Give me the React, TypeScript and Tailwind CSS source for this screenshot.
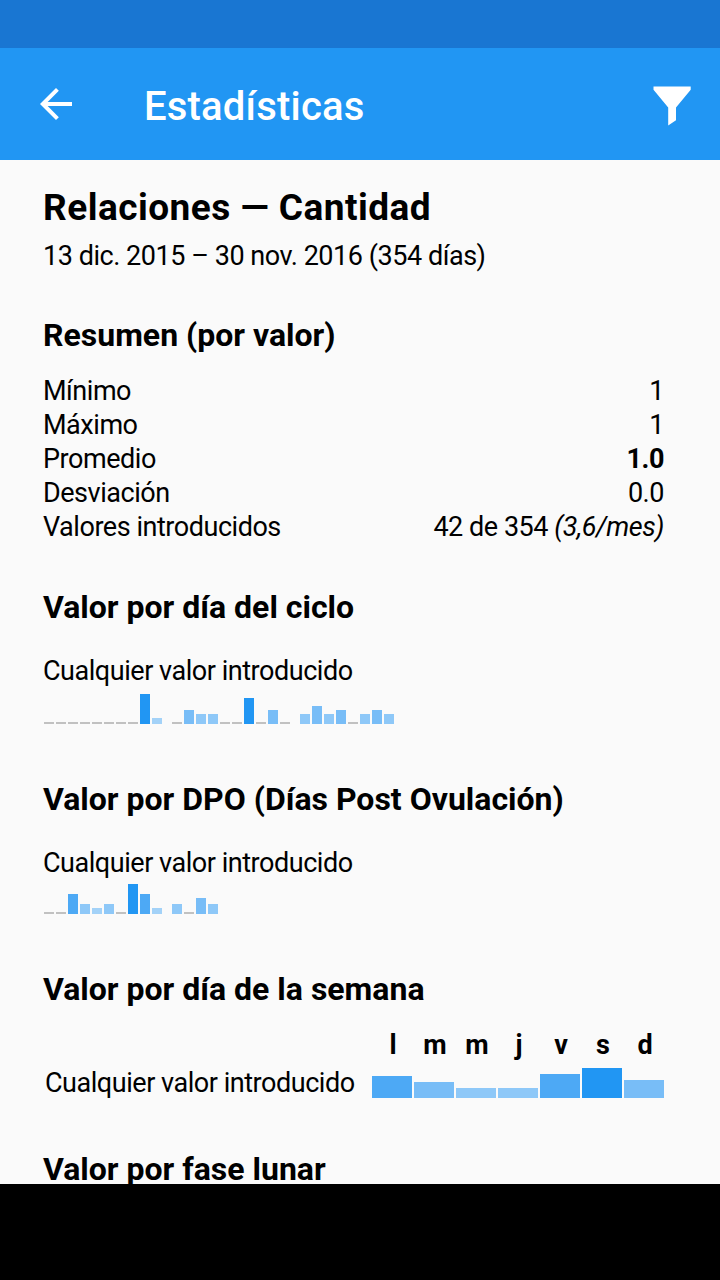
import clsx from "clsx";

type Row = { label: string; value: React.ReactNode };

const summary: Row[] = [
  { label: "Mínimo", value: "1" },
  { label: "Máximo", value: "1" },
  { label: "Promedio", value: <b>1.0</b> },
  { label: "Desviación", value: "0.0" },
  {
    label: "Valores introducidos",
    value: (
      <>
        42 de 354 <i>(3,6/mes)</i>
      </>
    ),
  },
];

// bar heights in px, grouped by ten days
const cycleDays = [
  [0, 0, 0, 0, 0, 0, 0, 0, 30, 6],
  [0, 14, 10, 10, 0, 0, 26, 0, 14, 0],
  [10, 18, 10, 14, 0, 10, 14, 10],
];

const dpoDays = [
  [0, 0, 20, 10, 6, 10, 0, 30, 20, 6],
  [10, 0, 16, 10],
];

const weekDays = [
  { day: "l", height: 22 },
  { day: "m", height: 16 },
  { day: "m", height: 10 },
  { day: "j", height: 10 },
  { day: "v", height: 24 },
  { day: "s", height: 30 },
  { day: "d", height: 18 },
];

function barColor(height: number) {
  if (height === 0) return "bg-[#c1c1c1]";
  if (height > 24) return "bg-[#2196f3]";
  if (height > 18) return "bg-[#4da9f5]";
  if (height > 10) return "bg-[#78bdf7]";
  if (height > 6) return "bg-[#8ec8f8]";
  return "bg-[#a3d2f8]";
}

function Bar({ height, className }: { height: number; className: string }) {
  return (
    <div
      className={clsx(className, barColor(height))}
      style={{ height: height || 2 }}
    />
  );
}

function BarChart({ groups }: { groups: number[][] }) {
  return (
    <div className="flex items-end gap-2.5 h-[30px] pl-px">
      {groups.map((group, i) => (
        <div key={i} className="flex items-end gap-0.5">
          {group.map((height, j) => (
            <Bar key={j} height={height} className="w-2.5" />
          ))}
        </div>
      ))}
    </div>
  );
}

function Heading({ children }: { children: React.ReactNode }) {
  return (
    <h2 className="text-[32px] leading-[38px] font-bold tracking-normal whitespace-nowrap">
      {children}
    </h2>
  );
}

export default function App() {
  return (
    <div className="flex flex-col w-[720px] h-[1280px] overflow-hidden bg-[#fafafa] font-['Roboto',sans-serif] text-black">
      <div className="h-12 shrink-0 bg-[#1976d2]" />
      <header className="flex items-center h-28 shrink-0 bg-[#2196f3] text-white">
        <svg viewBox="0 0 24 24" className="w-12 h-12 ml-8" fill="currentColor">
          <path d="M20 11H7.83l5.59-5.59L12 4l-8 8 8 8 1.41-1.41L7.83 13H20v-2z" />
        </svg>
        <h1 className="ml-16 pt-1.5 flex-1 text-[40px] leading-[48px] font-medium tracking-[0.2px]">
          Estadísticas
        </h1>
        <svg viewBox="0 0 38 40" className="w-[38px] h-10 mt-1 mr-[29px]" fill="currentColor">
          <path d="M0.5 0.5H37.7V3.8L23 21.5V34.2L15.2 39.5V21.5L0.5 3.8Z" />
        </svg>
      </header>

      <main className="flex-1 min-h-0 overflow-hidden pl-[43px] pr-14 pt-[25px] text-[27px] leading-[34px] tracking-[-0.46px]">
        <h1 className="text-[37px] leading-[46px] font-bold tracking-[0.48px]">
          Relaciones — Cantidad
        </h1>
        <p className="pt-2">13 dic. 2015 – 30 nov. 2016 (354 días)</p>

        <section className="pt-[43px]">
          <Heading>Resumen (por valor)</Heading>
          <dl className="pt-5">
            {summary.map((row) => (
              <div key={row.label} className="flex justify-between">
                <dt>{row.label}</dt>
                <dd>{row.value}</dd>
              </div>
            ))}
          </dl>
        </section>

        <section className="pt-11">
          <Heading>Valor por día del ciclo</Heading>
          <p className="pt-7 pb-1.5">Cualquier valor introducido</p>
          <BarChart groups={cycleDays} />
        </section>

        <section className="pt-14">
          <Heading>Valor por DPO (Días Post Ovulación)</Heading>
          <p className="pt-7 pb-1">Cualquier valor introducido</p>
          <BarChart groups={dpoDays} />
        </section>

        <section className="pt-14">
          <Heading>Valor por día de la semana</Heading>
          <div className="flex justify-between items-end pt-5 pl-0.5">
            <p className="leading-[30px]">Cualquier valor introducido</p>
            <div className="flex gap-0.5">
              {weekDays.map(({ day, height }, i) => (
                <div key={i} className="flex flex-col w-10">
                  <b className="text-center tracking-normal pl-0.5">{day}</b>
                  <div className="flex items-end h-9">
                    <Bar height={height} className="w-10" />
                  </div>
                </div>
              ))}
            </div>
          </div>
        </section>

        <section className="pt-[52px]">
          <Heading>Valor por fase lunar</Heading>
        </section>
      </main>

      <div className="h-24 shrink-0 bg-black" />
    </div>
  );
}
